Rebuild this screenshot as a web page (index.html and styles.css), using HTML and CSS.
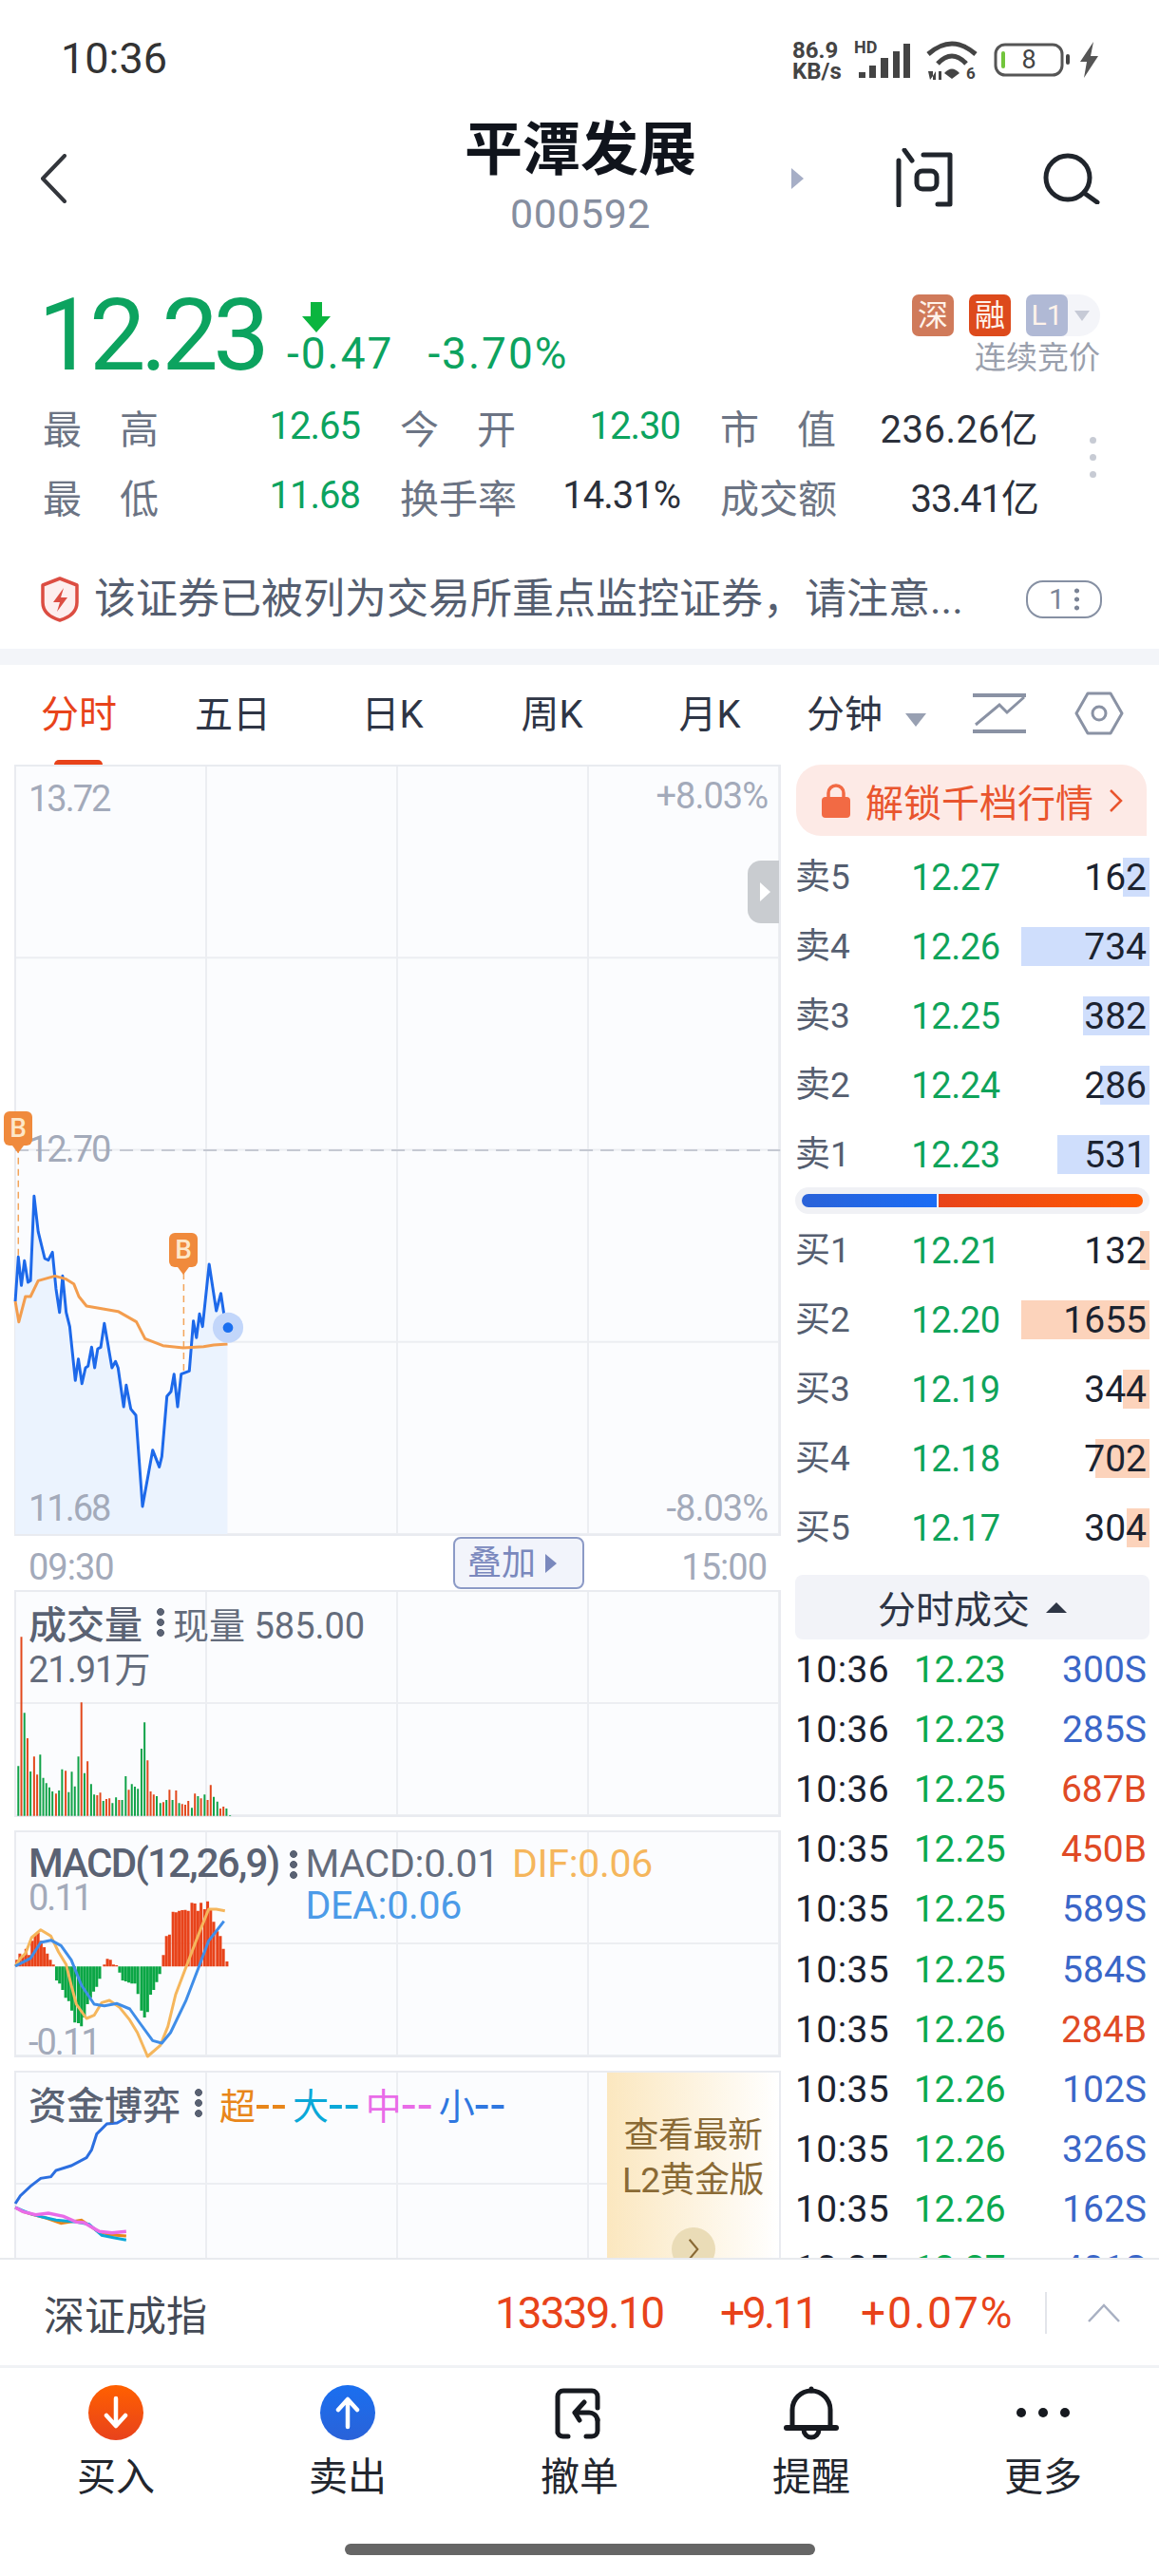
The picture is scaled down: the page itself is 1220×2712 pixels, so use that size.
FILE: index.html
```html
<!DOCTYPE html>
<html lang="zh-CN">
<head>
<meta charset="utf-8">
<title>平潭发展 000592</title>
<link rel="stylesheet" href="styles.css">
</head>
<body>
<div class="phone">

  <div class="status">
    <span class="clock">10:36</span>
    <div class="status-right">
      <div class="net"><span>86.9</span><span>KB/s</span></div>
      <svg class="sig" viewBox="0 0 58 42"><text x="-1" y="14" class="hd">HD</text><path fill="#444" d="M4 34h7v6H4zM15 27h7v13h-7zM27 19h8v21h-8zM40 12h7v28h-7zM51 4h7v36h-7z"/></svg>
      <svg class="wifi" viewBox="0 0 56 42"><path fill="none" stroke="#444" stroke-width="5" d="M3 15Q28-7 53 15M13 25Q28 9 43 25"/><path fill="#444" d="M20 35Q28 26 36 35L28 41Z"/><path fill="#444" d="M3 33h5v5l3-5h0v9h-3v-4l-3 4ZM14 33h3v9h-3z"/><text x="43" y="41" class="six">6</text></svg>
      <svg class="batt" viewBox="0 0 80 36"><rect x="2" y="2" width="70" height="32" rx="10" fill="none" stroke="#555" stroke-width="3"/><rect x="8" y="9" width="4" height="18" rx="2" fill="#72c53c"/><text x="37" y="27" class="batt-n" text-anchor="middle">8</text><rect x="76" y="12" width="4" height="11" rx="2" fill="#444"/></svg>
      <svg class="bolt" viewBox="0 0 20 38"><path fill="#555" d="M15 0 1 21h7L5 38 20 15h-8z"/></svg>
    </div>
  </div>

  <div class="titlebar">
    <svg class="back" viewBox="0 0 28 52"><path d="M26 2 3 26l23 24" fill="none" stroke="#33363c" stroke-width="4" stroke-linecap="round" stroke-linejoin="round"/></svg>
    <div class="title-mid">
      <div class="title">平潭发展</div>
      <div class="code">000592</div>
    </div>
    <div class="title-right">
      <svg class="tri-r" viewBox="0 0 13 22"><path d="M0 0 13 11 0 22Z" fill="#a6aec6"/></svg>
      <svg class="ask" viewBox="0 0 60 62"><g fill="none" stroke="#20252c" stroke-width="5" stroke-linecap="round" stroke-linejoin="round"><path d="M3 13v47M9 2l8 11M29 7h28v52H44"/><rect x="22" y="24" width="21" height="19" rx="6"/></g></svg>
      <svg class="search" viewBox="0 0 60 54"><g fill="none" stroke="#20252c" stroke-width="5" stroke-linecap="round"><circle cx="26" cy="26" r="23"/><path d="M43 42 57 52"/></g></svg>
    </div>
  </div>

  <div class="quote">
    <div class="price">12.23</div>
    <div class="delta">
      <svg class="down" viewBox="0 0 32 32"><path d="M10 0h12v15h9L16 32 1 15h9z" fill="#0bb53f"/></svg>
      <div class="delta-nums"><span>-0.47</span><span>-3.70%</span></div>
    </div>
    <div class="tags">
      <div class="tag-row">
        <span class="tag t-sz">深</span><span class="tag t-rong">融</span>
        <span class="tag-l1"><span class="tag t-l1">L1</span><i class="tag-caret"></i></span>
      </div>
      <div class="tag-note">连续竞价</div>
    </div>
  </div>

  <div class="stats">
    <div class="stats-grid">
      <div class="cell"><span class="lab two"><b>最</b><b>高</b></span><span class="val green">12.65</span></div>
      <div class="cell"><span class="lab two"><b>今</b><b>开</b></span><span class="val green">12.30</span></div>
      <div class="cell"><span class="lab two"><b>市</b><b>值</b></span><span class="val wide">236.26亿</span></div>
      <div class="cell"><span class="lab two"><b>最</b><b>低</b></span><span class="val green">11.68</span></div>
      <div class="cell"><span class="lab">换手率</span><span class="val">14.31%</span></div>
      <div class="cell"><span class="lab">成交额</span><span class="val">33.41亿</span></div>
    </div>
    <div class="more-dots"><i></i><i></i><i></i></div>
  </div>

  <div class="notice">
    <svg class="shield" viewBox="0 0 42 48"><path d="M21 2 39 9v18c0 10-8 16-18 19C11 43 3 37 3 27V9Z" fill="#fdeeee" stroke="#dc4d42" stroke-width="3.5" stroke-linejoin="round"/><path d="M25 12 14 27h7l-3 10 11-15h-7z" fill="#dc4d42"/></svg>
    <span class="notice-text">该证券已被列为交易所重点监控证券，请注意...</span>
    <span class="notice-badge">1<i class="kebab thin"></i></span>
  </div>

  <div class="band"></div>

  <div class="tabs">
    <div class="tab active">分时</div>
    <div class="tab">五日</div>
    <div class="tab">日K</div>
    <div class="tab">周K</div>
    <div class="tab">月K</div>
    <div class="tab">分钟</div>
    <svg class="tab-caret" viewBox="0 0 22 14"><path d="M0 0h22L11 14z" fill="#98a0b2"/></svg>
    <svg class="tab-line" viewBox="0 0 56 44"><g fill="none" stroke="#8a92a4" stroke-width="3"><path d="M0 3h56M0 41h56" stroke-width="4"/><path d="M3 34 28 13l8 8 18-16"/></g></svg>
    <svg class="tab-hex" viewBox="0 0 52 46"><g fill="none" stroke="#8a92a4" stroke-width="3" stroke-linejoin="round"><path d="M14 2h24l12 21-12 21H14L2 23Z"/><circle cx="26" cy="23" r="7"/></g></svg>
  </div>

  <div class="main">
    <div class="col-left">

      <div class="chart chart-main">
        <svg class="zs zs-main" viewBox="0 0 1568 1200" preserveAspectRatio="none">
          <path class="area" d="M30 510 36 370 42 460 48 382 55 450 60 445 67 178 75 290 88 375 95 380 103 355 110 470 117 545 123 430 130 545 137 590 148 760 154 692 161 770 168 720 173 715 180 655 186 720 192 660 198 655 205 580 220 720 227 700 232 720 243 843 248 775 257 850 267 870 280 1158 300 980 313 1033 318 1000 328 810 336 795 342 740 349 843 356 740 372 730 380 572 386 625 392 550 398 590 411 393 425 540 434 485 440 550 447 593V1245H30Z"/>
          <path class="dash-gray" d="M30 33H1533"/>
          <path class="dash-or" d="M36 20V370M361 420V735"/>
          <path class="l-blue" d="M30 510 36 370 42 460 48 382 55 450 60 445 67 178 75 290 88 375 95 380 103 355 110 470 117 545 123 430 130 545 137 590 148 760 154 692 161 770 168 720 173 715 180 655 186 720 192 660 198 655 205 580 220 720 227 700 232 720 243 843 248 775 257 850 267 870 280 1158 300 980 313 1033 318 1000 328 810 336 795 342 740 349 843 356 740 372 730 380 572 386 625 392 550 398 590 411 393 425 540 434 485 440 550 447 593"/>
          <path class="l-or" d="M30 510 37 575 50 495 60 495 75 445 108 430 130 440 145 455 155 495 170 525 232 542 268 575 285 628 320 650 360 657 400 653 420 648 447 645"/>
          <ellipse class="dot-halo" cx="448" cy="593" rx="30" ry="48"/>
          <ellipse class="dot-core" cx="448" cy="593" rx="10" ry="16"/>
        </svg>
        <span class="ax a-hi">13.72</span>
        <span class="ax a-hipct">+8.03%</span>
        <span class="ax a-mid">12.70</span>
        <span class="ax a-lo">11.68</span>
        <span class="ax a-lopct">-8.03%</span>
        <span class="bmark b1">B</span>
        <span class="bmark b2">B</span>
        <span class="handle"></span>
      </div>

      <div class="timerow">
        <span class="t-l">09:30</span>
        <span class="overlay-btn">叠加<i></i></span>
        <span class="t-r">15:00</span>
      </div>

      <div class="chart chart-sub">
        <svg class="zs zs-vol" viewBox="0 0 1568 1200" preserveAspectRatio="none">
          <path class="bar-g" d="M36 778V935M48 610V935M60 795V935M79 742V935M85 815V935M91 832V935M97 845V935M103 858V935M116 855V935M122 788V935M135 860V935M141 796V935M147 842V935M154 748V935M166 800V935M179 835V935M185 868V935M203 888V935M221 895V935M228 877V935M240 885V935M247 810V935M259 835V935M265 843V935M271 850V935M278 723V935M284 640V935M308 873V935M315 895V935M327 885V935M339 885V935M352 895V935M377 910V935M389 873V935M402 868V935M420 875V935M427 890V935M445 912V935M452 933V935"/>
          <path class="bar-r" d="M42 370V935M54 690V935M67 748V935M73 805V935M110 865V935M129 793V935M160 577V935M172 763V935M191 870V935M197 862V935M209 882V935M215 880V935M234 885V935M253 853V935M290 760V935M296 858V935M302 868V935M321 892V935M333 853V935M346 855V935M358 898V935M364 900V935M370 888V935M383 865V935M395 880V935M408 885V935M414 838V935M433 912V935M439 906V935"/>
        </svg>
        <div class="sub-head"><b class="sub-name">成交量</b><i class="kebab"></i><span>现量 585.00</span></div>
        <div class="sub-second">21.91万</div>
      </div>

      <div class="chart chart-sub macd">
        <svg class="zs zs-macd" viewBox="0 0 1568 1200" preserveAspectRatio="none">
          <path class="mb-r" d="M33 190V211M39 170V211M45 180V211M51 155V211M57 175V211M63 130V211M69 110V211M75 105V211M81 130V211M87 150V211M93 170V211M99 190V211M105 205V211M205 205V211M211 187V211M217 190V211M223 205V211M229 207V211M321 175V211M327 115V211M333 110V211M340 38V211M346 40V211M352 35V211M358 33V211M364 32V211M370 35V211M377 10V211M383 12V211M389 35V211M395 10V211M402 30V211M408 5V211M414 30V211M420 70V211M427 100V211M433 115V211M439 155V211M446 195V211"/>
          <path class="mb-g" d="M111 211V255M117 211V265M123 211V285M129 211V310M135 211V320M141 211V350M147 211V388M154 211V390M160 211V400M166 211V372M172 211V330M178 211V310M184 211V290M190 211V275M196 211V250M235 211V230M241 211V255M247 211V258M253 211V262M259 211V265M265 211V265M271 211V298M278 211V350M284 211V372M290 211V355M296 211V300M302 211V285M308 211V260M314 211V235"/>
          <path class="m-or" d="M30 210 40 185 50 170 62 120 80 95 100 115 115 165 130 205 140 270 150 330 170 375 185 365 200 325 215 318 235 340 255 380 270 420 290 495 315 460 330 400 345 300 365 215 390 110 410 30 425 30 442 35"/>
          <path class="m-bl" d="M30 210 60 185 80 135 100 128 120 145 140 190 160 270 185 330 205 335 230 328 255 345 275 390 300 445 318 453 335 420 365 320 390 215 410 130 440 68"/>
        </svg>
        <div class="macd-head">
          <b class="sub-name">MACD(12,26,9)</b><i class="kebab"></i>
          <div class="macd-vals">
            <div><span class="m1">MACD:0.01</span><span class="m2">DIF:0.06</span></div>
            <div class="m3">DEA:0.06</div>
          </div>
        </div>
        <span class="ax m-hi">0.11</span>
        <span class="ax m-lo">-0.11</span>
      </div>

      <div class="chart chart-sub game">
        <svg class="zs zs-game" viewBox="0 0 1568 1200" preserveAspectRatio="none">
          <path class="g-bl" d="M30 960 40 935 60 905 80 880 100 875 110 855 140 840 170 815 180 790 190 740 210 708 230 705 247 690"/>
          <path class="g-or" d="M30 972 45 985 65 995 90 1005 120 1022 160 1012 190 1045 215 1058 248 1062"/>
          <path class="g-cy" d="M30 972 45 982 60 992 85 1003 110 1012 150 1018 175 1025 200 1060 225 1068 248 1075"/>
          <path class="g-mg" d="M30 972 45 985 70 995 95 990 125 1000 150 1018 165 1020 195 1048 220 1052 248 1048"/>
        </svg>
        <div class="game-head">
          <b class="sub-name">资金博弈</b><i class="kebab"></i>
          <span class="leg c-or">超<em>--</em></span><span class="leg c-cy">大<em>--</em></span><span class="leg c-mg">中<em>--</em></span><span class="leg c-bl">小<em>--</em></span>
        </div>
        <div class="gold">
          <div>查看最新</div>
          <div>L2黄金版</div>
          <span class="gold-go"><svg viewBox="0 0 14 28"><path d="M2 2l10 12L2 26" fill="none" stroke="#8a6a35" stroke-width="2.5"/></svg></span>
        </div>
      </div>
    </div>

    <div class="col-right">
      <div class="unlock">
        <svg class="lock" viewBox="0 0 30 36"><path d="M7 16V10a8 8 0 0 1 16 0v6" fill="none" stroke="#f26a44" stroke-width="3.5"/><rect y="14" width="30" height="22" rx="4" fill="#f26a44"/></svg>
        <span>解锁千档行情</span>
        <svg class="unlock-go" viewBox="0 0 15 26"><path d="M2 2l11 11L2 24" fill="none" stroke="#e9552e" stroke-width="2.5"/></svg>
      </div>

      <div class="book book-sell">
        <div class="row"><span class="r-l">卖5</span><span class="r-p">12.27</span><span class="r-q"><i class="fill sell" style="width:28px"></i><span>162</span></span></div>
        <div class="row"><span class="r-l">卖4</span><span class="r-p">12.26</span><span class="r-q"><i class="fill sell" style="width:135px"></i><span>734</span></span></div>
        <div class="row"><span class="r-l">卖3</span><span class="r-p">12.25</span><span class="r-q"><i class="fill sell" style="width:70px"></i><span>382</span></span></div>
        <div class="row"><span class="r-l">卖2</span><span class="r-p">12.24</span><span class="r-q"><i class="fill sell" style="width:52px"></i><span>286</span></span></div>
        <div class="row"><span class="r-l">卖1</span><span class="r-p">12.23</span><span class="r-q"><i class="fill sell" style="width:97px"></i><span>531</span></span></div>
      </div>

      <div class="ratio"><i class="ratio-b"></i><i class="ratio-r"></i></div>

      <div class="book">
        <div class="row"><span class="r-l">买1</span><span class="r-p">12.21</span><span class="r-q"><i class="fill buy" style="width:10px"></i><span>132</span></span></div>
        <div class="row"><span class="r-l">买2</span><span class="r-p">12.20</span><span class="r-q"><i class="fill buy" style="width:135px"></i><span>1655</span></span></div>
        <div class="row"><span class="r-l">买3</span><span class="r-p">12.19</span><span class="r-q"><i class="fill buy" style="width:28px"></i><span>344</span></span></div>
        <div class="row"><span class="r-l">买4</span><span class="r-p">12.18</span><span class="r-q"><i class="fill buy" style="width:57px"></i><span>702</span></span></div>
        <div class="row"><span class="r-l">买5</span><span class="r-p">12.17</span><span class="r-q"><i class="fill buy" style="width:24px"></i><span>304</span></span></div>
      </div>

      <div class="tick-head"><span>分时成交</span><i></i></div>

      <div class="tick"><span>10:36</span><span class="tp">12.23</span><span class="ts">300S</span></div>
      <div class="tick"><span>10:36</span><span class="tp">12.23</span><span class="ts">285S</span></div>
      <div class="tick"><span>10:36</span><span class="tp">12.25</span><span class="tb">687B</span></div>
      <div class="tick"><span>10:35</span><span class="tp">12.25</span><span class="tb">450B</span></div>
      <div class="tick"><span>10:35</span><span class="tp">12.25</span><span class="ts">589S</span></div>
      <div class="tick"><span>10:35</span><span class="tp">12.25</span><span class="ts">584S</span></div>
      <div class="tick"><span>10:35</span><span class="tp">12.26</span><span class="tb">284B</span></div>
      <div class="tick"><span>10:35</span><span class="tp">12.26</span><span class="ts">102S</span></div>
      <div class="tick"><span>10:35</span><span class="tp">12.26</span><span class="ts">326S</span></div>
      <div class="tick"><span>10:35</span><span class="tp">12.26</span><span class="ts">162S</span></div>
      <div class="tick"><span>10:35</span><span class="tp">12.27</span><span class="ts">401S</span></div>
    </div>
  </div>

  <div class="indexbar">
    <span class="ix-name">深证成指</span>
    <span class="ix-p">13339.10</span>
    <span class="ix-c">+9.11</span>
    <span class="ix-r">+0.07%</span>
    <i class="ix-div"></i>
    <svg class="ix-up" viewBox="0 0 36 20"><path d="M2 19 18 2l16 17" fill="none" stroke="#a8b0c2" stroke-width="2.5"/></svg>
  </div>

  <div class="nav">
    <div class="nav-item">
      <svg class="nav-ic" viewBox="0 0 58 58"><defs><linearGradient id="gb" x1="0" y1="0" x2="0" y2="1"><stop offset="0" stop-color="#ff6000"/><stop offset="1" stop-color="#e8421c"/></linearGradient></defs><circle cx="29" cy="29" r="29" fill="url(#gb)"/><path d="M29 14v28M19 32l10 11 10-11" fill="none" stroke="#fff" stroke-width="4.5" stroke-linecap="round" stroke-linejoin="round"/></svg>
      <span>买入</span>
    </div>
    <div class="nav-item">
      <svg class="nav-ic" viewBox="0 0 58 58"><defs><linearGradient id="gs" x1="0" y1="0" x2="0" y2="1"><stop offset="0" stop-color="#1a6ff0"/><stop offset="1" stop-color="#2a62d8"/></linearGradient></defs><circle cx="29" cy="29" r="29" fill="url(#gs)"/><path d="M29 44V16M19 26l10-11 10 11" fill="none" stroke="#fff" stroke-width="4.5" stroke-linecap="round" stroke-linejoin="round"/></svg>
      <span>卖出</span>
    </div>
    <div class="nav-item">
      <svg class="nav-ic" viewBox="0 0 58 58"><g fill="none" stroke="#16191f" stroke-width="5" stroke-linecap="round" stroke-linejoin="round"><path d="M6 50V12a6 6 0 0 1 6-6h30a6 6 0 0 1 6 6v12M6 50a6 6 0 0 0 6 4h5M48 36v12a6 6 0 0 1-6 6h-6"/><path d="M34 18 24 29M24 29h14a9 9 0 0 1 10 8M24 29l5 8"/></g></svg>
      <span>撤单</span>
    </div>
    <div class="nav-item">
      <svg class="nav-ic" viewBox="0 0 58 58"><g fill="none" stroke="#16191f" stroke-width="5" stroke-linecap="round" stroke-linejoin="round"><path d="M9 43V26a20 20 0 0 1 40 0v17"/><path d="M3 45h52" stroke-width="6"/><path d="M21 47a8 8 0 0 0 16 0"/><path d="M29 4V6"/></g></svg>
      <span>提醒</span>
    </div>
    <div class="nav-item">
      <svg class="nav-ic" viewBox="0 0 58 58"><g fill="#16191f"><circle cx="6" cy="29" r="5"/><circle cx="29" cy="29" r="5"/><circle cx="52" cy="29" r="5"/></g></svg>
      <span>更多</span>
    </div>
  </div>

  <div class="homebar"></div>
</div>
</body>
</html>
```

FILE: styles.css
```css
* { box-sizing: border-box; }
html, body { margin: 0; padding: 0; background: #fff; }
body { font-family: Roboto, "Noto Sans CJK SC", sans-serif; }
i, em, b { font-style: normal; font-weight: inherit; }

.phone { width: 1220px; height: 2712px; overflow: hidden; display: flex; flex-direction: column; background: #fff; }

/* status bar */
.status { height: 110px; flex: none; display: flex; justify-content: space-between; align-items: flex-start; padding: 42px 64px 0 64px; }
.clock { font-size: 45px; line-height: 40px; color: #333; }
.status-right { display: flex; align-items: flex-start; }
.net { width: 58px; margin-right: 8px; display: flex; flex-direction: column; font-size: 24px; line-height: 22px; font-weight: 700; color: #444; }
.sig { width: 58px; height: 42px; margin-right: 16px; overflow: visible; }
.hd { font: 700 18px Roboto, sans-serif; fill: #444; }
.wifi { width: 56px; height: 42px; margin-right: 16px; overflow: visible; }
.six { font: 700 17px Roboto, sans-serif; fill: #444; }
.batt { width: 80px; height: 36px; margin: 3px 10px 0 0; }
.batt-n { font: 400 27px Roboto, sans-serif; fill: #444; }
.bolt { width: 20px; height: 38px; margin-top: 2px; }

/* title bar */
.titlebar { height: 150px; flex: none; display: grid; grid-template-columns: 1fr 240px 1fr; padding: 0 40px 0 42px; }
.back { width: 28px; height: 52px; margin-top: 52px; }
.title-mid { display: flex; flex-direction: column; align-items: center; padding-top: 18px; }
.title { font-size: 61px; line-height: 60px; font-weight: 700; color: #10141c; white-space: nowrap; }
.code { font-size: 43px; line-height: 44px; margin-top: 15px; color: #868e9f; letter-spacing: 0.5px; }
.title-right { display: flex; align-items: flex-start; }
.tri-r { width: 13px; height: 22px; margin: 67px 0 0 102px; flex: none; }
.ask { width: 60px; height: 62px; margin: 46px 0 0 97px; flex: none; }
.search { width: 60px; height: 54px; margin: 51px 0 0 95px; flex: none; }

/* quote */
.quote { height: 110px; flex: none; margin-top: 36px; padding: 0 62px 0 40px; display: flex; align-items: flex-start; }
.price { width: 262px; font-size: 106px; line-height: 114px; letter-spacing: -5.6px; color: #0ca35f; flex: none; }
.delta { padding-top: 22px; }
.down { width: 32px; height: 32px; margin-left: 15px; display: block; }
.delta-nums { display: flex; gap: 36px; font-size: 46px; line-height: 44px; letter-spacing: 2px; color: #0ca35f; }
.tags { margin-left: auto; margin-top: 14px; display: flex; flex-direction: column; align-items: flex-end; }
.tag-row { display: flex; gap: 16px; }
.tag { width: 44px; height: 44px; border-radius: 7px; font-size: 32px; line-height: 44px; text-align: center; color: #fff3ea; }
.t-sz { background: #d07a5a; }
.t-rong { background: #dd4a1c; }
.t-l1 { background: #b0b9d5; font-size: 30px; }
.tag-l1 { display: flex; width: 78px; background: #f4f5f9; border-radius: 7px 22px 22px 7px; }
.tag-caret { width: 0; height: 0; margin: 17px 0 0 7px; border: 8px solid transparent; border-top: 11px solid #c6cad6; border-bottom: 0; }
.tag-note { font-size: 33px; line-height: 38px; margin-top: 4px; color: #9aa0ad; }

/* stats */
.stats { height: 146px; flex: none; margin-top: 6px; padding-left: 45px; display: flex; }
.stats-grid { display: grid; grid-template-columns: 334px 295px 335px; grid-auto-rows: 73px; column-gap: 42px; }
.cell { display: flex; justify-content: space-between; align-items: center; }
.lab { font-size: 41px; color: #6c7484; white-space: nowrap; display: flex; }
.lab.two { width: 122px; justify-content: space-between; }
.val { font-size: 40px; letter-spacing: -1px; color: #2b303b; }
.val.green { color: #0ca35f; }
.val.wide { letter-spacing: 0.5px; }
.more-dots { margin: 48px 0 0 54px; display: flex; flex-direction: column; gap: 11px; }
.more-dots i { width: 7px; height: 7px; border-radius: 50%; background: #c7cbd4; }

/* notice */
.notice { height: 125px; flex: none; padding: 27px 60px 6px 42px; display: flex; align-items: center; }
.shield { width: 42px; height: 48px; flex: none; }
.notice-text { font-size: 44px; line-height: 50px; margin-left: 15px; color: #555e70; white-space: nowrap; }
.notice-badge { margin-left: auto; width: 80px; height: 40px; flex: none; border: 2px solid #8690a3; border-radius: 18px; font-size: 30px; line-height: 36px; color: #7b8496; display: flex; align-items: center; justify-content: center; gap: 10px; }

.band { height: 17px; flex: none; background: #f3f5f9; }

/* tabs */
.tabs { height: 105px; flex: none; display: grid; grid-template-columns: 166px 158px 178px 158px 174px 110px auto auto auto; justify-content: start; align-items: center; }
.tab { position: relative; text-align: center; font-size: 40px; line-height: 50px; color: #2e3545; }
.tab.active { color: #e8431a; }
.tab.active::after { content: ""; position: absolute; left: 57px; top: 72px; width: 51px; height: 10px; border-radius: 5px 5px 0 0; background: #e8431a; }
.tab-caret { width: 22px; height: 14px; margin: 10px 0 0 9px; }
.tab-line { width: 56px; height: 44px; margin: -4px 0 0 49px; }
.tab-hex { width: 52px; height: 46px; margin: -4px 0 0 51px; }

/* main */
.main { height: 1572px; flex: none; overflow: hidden; display: flex; }
.col-left { width: 837px; flex: none; padding-left: 15px; display: flex; flex-direction: column; }
.col-right { width: 373px; flex: none; }

.chart { position: relative; width: 807px; flex: none; border: 2px solid #e9ebf0; background-color: #fbfcfe;
  background-image: linear-gradient(to right, #eceef2 2px, transparent 2px), linear-gradient(to bottom, #eceef2 2px, transparent 2px);
  background-size: 201px 100%, 100% 118px; background-position: -2px 0, 0 -2px; }
.chart-main { height: 812px; background-size: 201px 100%, 100% 202.25px; }
.chart-sub { height: 239px; }
.macd, .game { margin-top: 14px; }

.zs { position: absolute; left: -17px; width: 840px; height: 400px; overflow: visible; pointer-events: none; }
.zs * { vector-effect: non-scaling-stroke; fill: none; }
.zs-main { top: 393px; }
.zs-vol { top: -76px; }
.zs-macd { top: 71px; }
.zs-game { top: -182px; }
.zs .area { fill: #ebf3fe; stroke: none; }
.zs .dot-halo { fill: #c2d6fa; }
.zs .dot-core { fill: #1a6ff0; }
.dash-gray { stroke: #c5c9d2; stroke-width: 2; stroke-dasharray: 14 8; }
.dash-or { stroke: #f3a55a; stroke-width: 1.5; stroke-dasharray: 7 5; }
.l-blue { stroke: #1d69ea; stroke-width: 3; stroke-linejoin: round; }
.l-or { stroke: #f39d4e; stroke-width: 3; stroke-linejoin: round; }
.bar-g { stroke: #10a248; stroke-width: 2; }
.bar-r { stroke: #e2481c; stroke-width: 2; }
.mb-r { stroke: #e8431a; stroke-width: 3; }
.mb-g { stroke: #0ba645; stroke-width: 3; }
.m-or { stroke: #f5b65c; stroke-width: 3; stroke-linejoin: round; }
.m-bl { stroke: #3f8de8; stroke-width: 3; stroke-linejoin: round; }
.g-bl { stroke: #2c6fe0; stroke-width: 3; }
.g-or { stroke: #e8861a; stroke-width: 3; }
.g-cy { stroke: #0aa8d8; stroke-width: 3; }
.g-mg { stroke: #e96ce8; stroke-width: 3.5; }

.ax { position: absolute; font-size: 38px; line-height: 40px; letter-spacing: -2px; color: #a3aaba; }
.a-hi { left: 13px; top: 14px; }
.a-hipct { right: 12px; top: 11px; letter-spacing: -1px; }
.a-mid { left: 13px; top: 383px; }
.a-lo { left: 13px; top: 761px; }
.a-lopct { right: 12px; top: 761px; letter-spacing: -1px; }

.bmark { position: absolute; width: 30px; height: 36px; border-radius: 6px; background: #f08a3c; color: #fde7c8; font-size: 28px; font-weight: 500; line-height: 36px; text-align: center; }
.bmark::after { content: ""; position: absolute; left: 9px; top: 36px; border: 6px solid transparent; border-top: 8px solid #f08a3c; border-bottom: 0; }
.b1 { left: -13px; top: 363px; }
.b2 { left: 161px; top: 491px; }
.handle { position: absolute; right: 0; top: 99px; width: 33px; height: 66px; border-radius: 14px 0 0 14px; background: #c9ccd0; }
.handle::after { content: ""; position: absolute; left: 13px; top: 23px; border: 10px solid transparent; border-left: 11px solid #fff; border-right: 0; }

.timerow { height: 57px; flex: none; display: flex; align-items: flex-start; width: 807px; font-size: 38px; line-height: 48px; color: #a3aaba; letter-spacing: -1px; }
.t-l { width: 462px; padding: 9px 0 0 15px; flex: none; }
.t-r { flex: 1; text-align: right; padding: 9px 15px 0 0; }
.overlay-btn { width: 138px; height: 55px; margin-top: 1px; flex: none; border: 2px solid #8c9ac6; border-radius: 8px; background: #f2f4fb; color: #7a88bd; font-size: 36px; letter-spacing: 0; display: flex; align-items: center; padding-left: 13px; gap: 10px; }
.overlay-btn i { border: 10px solid transparent; border-left: 12px solid #7a88bd; border-right: 0; }

.sub-name { font-size: 40px; font-weight: 500; color: #5a6273; }
.kebab { display: inline-block; width: 8px; height: 30px; flex: none; background: radial-gradient(circle at 4px 4px, #5a6273 3.6px, transparent 4.2px) 0 0 / 8px 11px repeat-y; }
.kebab.thin { width: 5px; height: 24px; background: radial-gradient(circle at 2.5px 3px, #7b8496 2.2px, transparent 2.8px) 0 0 / 5px 9px repeat-y; }
.sub-head { position: relative; display: flex; align-items: center; height: 50px; margin-top: 7px; padding-left: 13px; color: #646c7c; font-size: 38px; white-space: nowrap; }
.sub-head .kebab { margin: 0 9px 0 15px; }
.sub-second { position: relative; padding-left: 13px; font-size: 38px; line-height: 44px; letter-spacing: -1px; color: #646c7c; margin-top: 3px; }

.macd-head { position: relative; display: flex; align-items: flex-start; padding: 11px 0 0 13px; white-space: nowrap; }
.macd-head .sub-name { line-height: 44px; letter-spacing: -1.8px; font-weight: 500; font-size: 42px; }
.macd-head .kebab { margin: 8px 8px 0 12px; }
.macd-vals { font-size: 41px; line-height: 44px; letter-spacing: -0.3px; }
.m1 { color: #646c7c; }
.m2 { color: #f5b65c; margin-left: 14px; }
.m3 { color: #4c9be8; }
.m-hi { left: 13px; top: 49px; }
.m-lo { left: 13px; top: 201px; }

.game-head { position: relative; display: flex; align-items: center; height: 50px; margin-top: 7px; padding-left: 13px; font-size: 38px; white-space: nowrap; }
.game-head .sub-name { font-size: 40px; }
.game-head .kebab { margin: 0 18px 0 15px; }
.leg { margin-right: 5px; display: flex; align-items: baseline; }
.game-head em { font-size: 54px; line-height: 0; letter-spacing: 2px; position: relative; top: 3px; }
.c-or { color: #e8861a; }
.c-cy { color: #0aa8d8; }
.c-mg { color: #e96ce8; }
.c-bl { color: #2f77e0; }
.gold { position: absolute; right: 0; top: 0; width: 181px; height: 100%; background: linear-gradient(to right, #fbe7bf, #fff); color: #8a6a35; font-size: 37px; line-height: 47px; text-align: center; padding-top: 43px; white-space: nowrap; letter-spacing: -0.5px; display: flex; flex-direction: column; align-items: center; }
.gold-go { width: 46px; height: 46px; margin-top: 26px; flex: none; border-radius: 50%; background: #eadcb7; display: flex; align-items: center; justify-content: center; }
.gold-go svg { width: 12px; height: 24px; }

/* right column */
.unlock { margin-left: 1px; width: 369px; height: 75px; background: #fdeae6; border-radius: 26px 26px 0 26px; display: flex; align-items: center; padding-left: 27px; color: #e9552e; font-size: 40px; white-space: nowrap; }
.lock { width: 30px; height: 36px; flex: none; margin-right: 16px; }
.unlock-go { width: 15px; height: 26px; margin-left: 16px; flex: none; }

.book-sell { margin-top: 7px; }
.row { height: 73px; display: grid; grid-template-columns: 111px 116px 1fr; align-items: center; }
.r-l { font-size: 37px; line-height: 44px; color: #555e70; white-space: nowrap; }
.r-p { text-align: center; font-size: 38px; color: #0fa35a; letter-spacing: -0.4px; }
.r-q { position: relative; height: 41px; display: flex; justify-content: flex-end; align-items: center; padding-right: 3px; font-size: 39px; color: #1c2330; }
.r-q span { position: relative; }
.fill { position: absolute; right: 0; top: 0; height: 41px; }
.fill.sell { background: #cfdefc; }
.fill.buy { background: #fcd3bb; }

.ratio { margin-top: -2px; margin-bottom: 2px; width: 373px; height: 28px; border-radius: 14px; background: #f0f1f5; padding: 7px; display: flex; gap: 2px; }
.ratio i { display: block; height: 14px; }
.ratio-b { width: 142px; border-radius: 7px 0 0 7px; background: linear-gradient(to right, #2a62d8, #1a6cf5); }
.ratio-r { flex: 1; border-radius: 0 7px 7px 0; background: linear-gradient(to right, #e8431a, #ff5a00); }

.tick-head { margin-top: 13px; width: 373px; height: 68px; border-radius: 8px; background: #f2f3f8; display: flex; align-items: center; padding-left: 87px; color: #2e3545; font-size: 40px; }
.tick-head i { margin-left: 17px; border: 11px solid transparent; border-bottom: 11px solid #2e3545; border-top: 0; }
.tick { height: 63.2px; display: grid; grid-template-columns: 125px 1fr auto; align-items: center; font-size: 39px; color: #1c2330; width: 370px; }
.tick > span:first-child { letter-spacing: 0.4px; }
.tp { color: #0ca94f; letter-spacing: -0.3px; }
.ts { color: #3a66c8; }
.tb { color: #e04a25; }

/* index bar */
.indexbar { height: 116px; flex: none; border-top: 2px solid #e8eaee; border-bottom: 3px solid #f0f2f5; display: grid; grid-template-columns: 475px 237px 148px 194px auto auto; justify-content: start; align-items: center; padding-left: 46px; }
.ix-name { font-size: 43px; color: #444a55; white-space: nowrap; }
.ix-p, .ix-c, .ix-r { font-size: 46px; color: #e8431a; }
.ix-p { letter-spacing: -2px; }
.ix-c { letter-spacing: -3px; }
.ix-r { letter-spacing: 2px; }
.ix-div { width: 2px; height: 44px; background: #e3e5ea; }
.ix-up { width: 36px; height: 20px; margin-left: 42px; }

/* nav */
.nav { height: 185px; flex: none; display: grid; grid-template-columns: repeat(5, 244px); padding-top: 18px; }
.nav-item { display: flex; flex-direction: column; align-items: center; font-size: 41px; line-height: 50px; color: #22262e; }
.nav-ic { width: 58px; height: 58px; margin-bottom: 14px; }

.homebar { width: 495px; height: 12px; flex: none; margin: 0 auto; border-radius: 6px; background: #666; }
```
